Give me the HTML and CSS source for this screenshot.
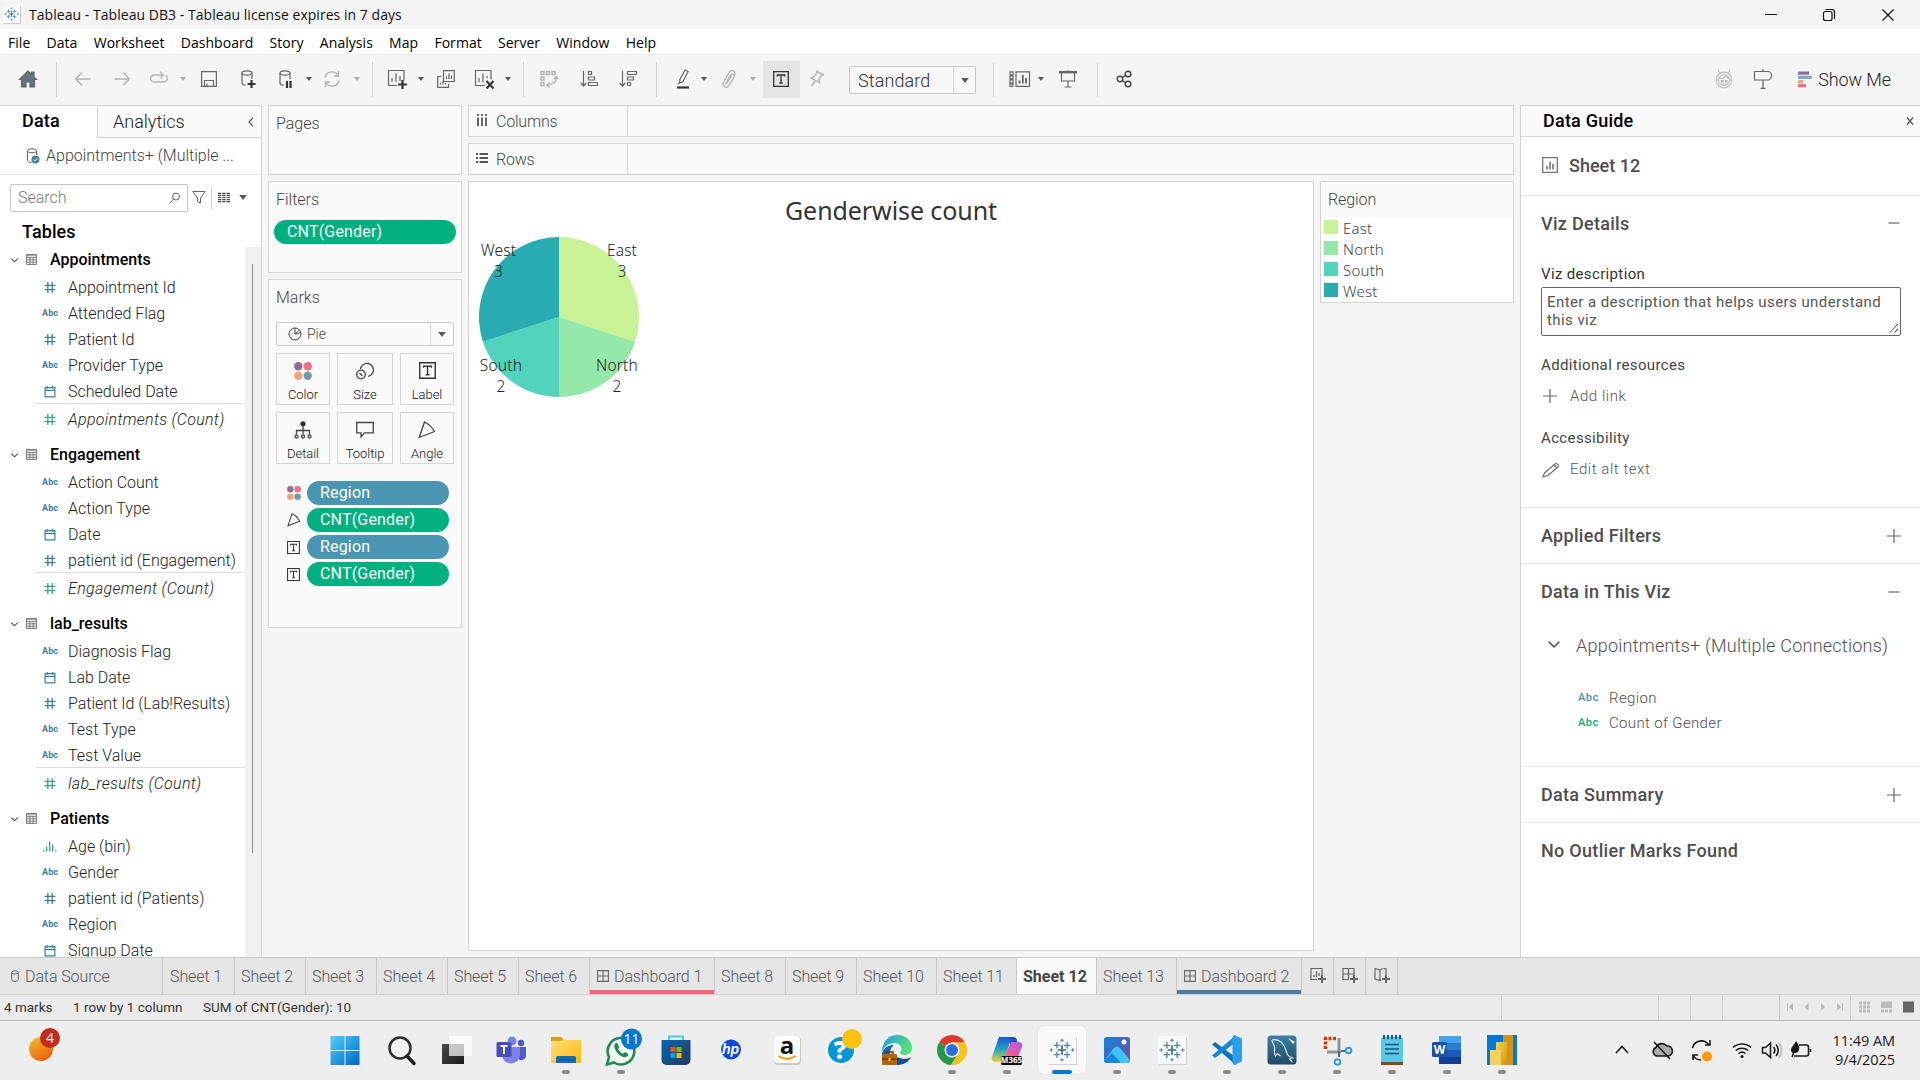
FILE: index.html
```
<!DOCTYPE html>
<html lang="en">
<head>
<meta charset="utf-8">
<title>Tableau - Tableau DB3</title>
<link rel="stylesheet" href="styles.css">
</head>
<body>
<svg class="defs" aria-hidden="true">
  <defs>
    <linearGradient id="gWin" x1="0" y1="0" x2="1" y2="1"><stop offset="0" stop-color="#4fd0ff"/><stop offset="1" stop-color="#0067c8"/></linearGradient>
    <linearGradient id="gEgg" x1="0" y1="0" x2="0.6" y2="1"><stop offset="0" stop-color="#f2c230"/><stop offset="1" stop-color="#f0600c"/></linearGradient>
    <linearGradient id="gFolder" x1="0" y1="0" x2="1" y2="1"><stop offset="0" stop-color="#ffe07a"/><stop offset="1" stop-color="#fbb80c"/></linearGradient>
    <linearGradient id="gStore" x1="0" y1="0" x2="1" y2="1"><stop offset="0" stop-color="#0569b8"/><stop offset="1" stop-color="#253858"/></linearGradient>
    <linearGradient id="gEdge" x1="0" y1="0" x2="1" y2="0.4"><stop offset="0" stop-color="#1b9de2"/><stop offset="1" stop-color="#5be07a"/></linearGradient>
    <linearGradient id="gCopL" x1="0" y1="0" x2="0" y2="1"><stop offset="0" stop-color="#1a56d8"/><stop offset="0.5" stop-color="#26a5c0"/><stop offset="1" stop-color="#e5d33a"/></linearGradient>
    <linearGradient id="gCopR" x1="1" y1="0" x2="0" y2="1"><stop offset="0" stop-color="#a55cf0"/><stop offset="0.5" stop-color="#ec55a8"/><stop offset="1" stop-color="#fb8a50"/></linearGradient>
    <linearGradient id="gPhoto" x1="0" y1="0" x2="1" y2="1"><stop offset="0" stop-color="#0a86e0"/><stop offset="1" stop-color="#80469c"/></linearGradient>
    <linearGradient id="gSql" x1="0" y1="0" x2="0" y2="1"><stop offset="0" stop-color="#3d80a6"/><stop offset="1" stop-color="#1f4a66"/></linearGradient>
    <linearGradient id="gBi" x1="0" y1="0" x2="1" y2="1"><stop offset="0" stop-color="#f8d54e"/><stop offset="1" stop-color="#d59312"/></linearGradient>
    <linearGradient id="gDark" x1="0" y1="0" x2="1" y2="1"><stop offset="0" stop-color="#4a4a4a"/><stop offset="1" stop-color="#1c1c1c"/></linearGradient>
  </defs>
  <symbol id="caret" viewBox="0 0 6 4"><path d="M0 0h6L3 4z" fill="currentColor"/></symbol>
  <symbol id="hash" viewBox="0 0 12 12"><path d="M4 1v10M8 1v10M1 4h10M1 8h10" fill="none" stroke="currentColor" stroke-width="1.2"/></symbol>
  <symbol id="cal" viewBox="0 0 12 12"><path d="M1.5 2.5h9v8.500h-9zM1.500 5h9M3.500 1v2.500M8.500 1v2.500" fill="none" stroke="currentColor" stroke-width="1.1"/></symbol>
  <symbol id="bin" viewBox="0 0 14 12"><path d="M.7 9.500v1.500M3.700 6v5M6.700 1v10M9.700 4v7M12.800 9.500v1.500" fill="none" stroke="currentColor" stroke-width="1.300"/></symbol>
  <symbol id="chev" viewBox="0 0 12 12"><path d="M1.500 4L6 8.500L10.500 4" fill="none" stroke="currentColor" stroke-width="1.300"/></symbol>
  <symbol id="table" viewBox="0 0 10 10"><path d="M.5.5h9v9h-9zM.5 3h9M.5 5.300h9M.5 7.500h9M3.500 3v6.500M6.500 3v6.500M.5 1h9" fill="none" stroke="#777" stroke-width=".9"/></symbol>
  <symbol id="tbox" viewBox="0 0 16 16"><path d="M.7.7h14.600v14.600h-14.600z M4.300 5.500V4h7.400v1.500M8 4v8M6.300 12h3.400" fill="none" stroke="#333" stroke-width="1.300"/></symbol>
  <symbol id="dots" viewBox="0 0 18 18"><circle cx="4.300" cy="4.300" r="4.200" fill="#8a6f9b"/><circle cx="13.700" cy="4.300" r="4.200" fill="#fb6b7c"/><circle cx="4.300" cy="13.700" r="4.200" fill="#f5a57a"/><circle cx="13.700" cy="13.700" r="4.200" fill="#6e9aa8"/></symbol>
  <symbol id="angle" viewBox="0 0 18 18"><path d="M6.500 1L1.200 16.500L16.500 10.500Q13 4 6.500 1z" fill="none" stroke="#444" stroke-width="1.300"/></symbol>
  <symbol id="plus" viewBox="0 0 16 16"><path d="M8 1v14M1 8h14" stroke="#666" stroke-width="1.200"/></symbol>
  <symbol id="dash" viewBox="0 0 16 16"><path d="M2.500 8h11" stroke="#666" stroke-width="1.200"/></symbol>
  <symbol id="board" viewBox="0 0 12 12"><path d="M.6.6h10.800v10.800H.6zM6 .6v10.800M.6 6h10.800" fill="none" stroke="#666" stroke-width="1.100"/></symbol>
  <symbol id="tabl" viewBox="0 0 28 28">
    <g fill="none" stroke="#4a88ad" stroke-width="1.400"><path d="M8.500 5.500v7M5 9h7M19.500 5.500v7M16 9h7M8.500 15.500v7M5 19h7M19.500 15.500v7M16 19h7"/><path d="M14 1.500v4M12 3.500h4M14 22.500v4M12 24.500h4M2.500 12v4M.5 14h4M25.500 12v4M23.500 14h4" stroke-width="1.100"/><path d="M14 9v10M9.500 14h9" stroke="#2f6f98" stroke-width="1.800"/></g>
  </symbol>
  <symbol id="tableauTile" viewBox="0 0 48 48"><rect x="11" y="11" width="28" height="28" fill="#d2d2d2"/><rect x="10" y="10" width="28" height="28" fill="#f8f8f8"/><use href="#tabl" x="11" y="11" width="26" height="26"/></symbol>
  <symbol id="run" viewBox="0 0 48 48"><rect x="20" y="44" width="8" height="4" rx="2" fill="#8a8a8a"/></symbol>
</svg>

<header class="titlebar">
  <svg class="app-icon" viewBox="0 0 18 20"><rect x="1" y="1" width="17" height="18" fill="#ccc"/><rect width="17" height="18" fill="#f7fafc"/><use href="#tabl" x="1" y="1" width="15" height="16"/></svg>
  <span class="app-title">Tableau - Tableau DB3 - Tableau license expires in 7 days</span>
  <svg class="win-controls" viewBox="0 0 132 16"><g fill="none" stroke="#111" stroke-width="1.200"><path d="M1 7.500h12M118.500 2.500l11 11M129.500 2.500l-11 11"/><rect x="59.500" y="4.500" width="8.500" height="9" rx="2"/><path d="M61.500 2.500h6.500a2.500 2.500 0 0 1 2.500 2.500v7"/></g></svg>
</header>

<nav class="menubar"><span>File</span><span>Data</span><span>Worksheet</span><span>Dashboard</span><span>Story</span><span>Analysis</span><span>Map</span><span>Format</span><span>Server</span><span>Window</span><span>Help</span></nav>

<div class="toolbar">
  <svg class="w20 g18" viewBox="0 0 20 18"><path d="M10 1L1.500 9.500h2V17H8v-5h4v5h4.500V9.500h2L16 7V2h-2.500v2.500z" fill="#66727f"/></svg>
  <i class="sep g18"></i>
  <svg class="w16 g18 off" viewBox="0 0 16 16"><path d="M15.500 8H1M7 1.500L.8 8L7 14.500"/></svg>
  <svg class="w16 g23 off" viewBox="0 0 16 16"><path d="M.5 8H15M9 1.500L15.200 8L9 14.500"/></svg>
  <svg class="w20 g19 off" viewBox="0 0 20 16"><path d="M13 4H5.500a4 4 0 0 0-4 3.500a4 4 0 0 0 4 3.500h9a4 4 0 0 0 4-3.500a3.500 3.500 0 0 0-1.500-3M11 .8L14.500 4L11 7.200"/></svg>
  <svg class="caret g11 dim"><use href="#caret"/></svg>
  <svg class="w16 g15" viewBox="0 0 16 16"><path d="M.6.6h14.800v14.800H.6zM3.500 15.400V9.500h9v5.900M6 15.400v-3"/></svg>
  <svg class="w16 g23" viewBox="0 0 16 18"><path d="M2 3v10c0 1.200 1.500 2 3.500 2.300M12 3v6"/><ellipse cx="7" cy="3" rx="5" ry="2.200"/><path class="bold" d="M11.500 10v8M7.500 14h8"/></svg>
  <svg class="w16 g22" viewBox="0 0 16 18"><path d="M2 3v10c0 1.200 1.500 2 3.500 2.300M12 3v6"/><ellipse cx="7" cy="3" rx="5" ry="2.200"/><path class="bold" d="M9 11v7M12.500 11v7"/></svg>
  <svg class="caret g12"><use href="#caret"/></svg>
  <svg class="w18 g11 off" viewBox="0 0 18 18"><path d="M2 7.500A7 7 0 0 1 15 5.500M16 10.500A7 7 0 0 1 3 12.500M15.500 1v5H11M2.500 17v-5H7"/></svg>
  <svg class="caret g13 dim"><use href="#caret"/></svg>
  <i class="sep g12"></i>
  <svg class="w20 g14" viewBox="0 0 20 20"><path d="M10 16.500H1.500v-15h15.500v10M5 13v-4M9 13V4.500M13 12V7"/><path class="bold" d="M15.500 11v9M11 15.500h9"/></svg>
  <svg class="caret g11"><use href="#caret"/></svg>
  <svg class="w18 g13" viewBox="0 0 18 18"><path d="M6.500.700h10.800v10.800H6.500zM4.500 6.500H.7v10.800h10.800v-3.500M9.500 9V6.500M12 9V3.500M14.500 9V5.500M3.500 14.500v-2M6 14.500v-4M8.500 14.500v-1.500"/></svg>
  <svg class="w20 g19" viewBox="0 0 20 20"><path d="M11 16.500H1.500v-15h15.500v9M5 13v-4M9 13V4.500M13 9V7"/><path class="bold" d="M12.500 12l7 7.500M19.500 12l-7 7.500"/></svg>
  <svg class="caret g11"><use href="#caret"/></svg>
  <i class="sep g12"></i>
  <svg class="w18 g16 off" viewBox="0 0 18 18"><path d="M1 1.500h3v3H1zM6.500 1.500h3v3h-3zM12 1.500h3v3h-3zM1 7h3v3H1zM1 12.500h3v3H1zM16.500 7c0 5-3 7.500-9.500 8M14 9l2.500-2.500L18 9M9.500 12.500L7 15l2.500 2.500"/></svg>
  <svg class="w18 g22" viewBox="0 0 18 18"><path d="M3.500 1v15M.7 13l2.800 3l2.800-3M8.500 1.500h3v3h-3zM8.500 7h6v3h-6zM8.500 12.500h9v3h-9z"/></svg>
  <svg class="w18 g21" viewBox="0 0 18 18"><path d="M3.500 1v15M.7 13l2.800 3l2.800-3M8.500 1.500h9v3h-9zM8.500 7h6v3h-6zM8.500 12.500h3v3h-3z"/></svg>
  <i class="sep g19"></i>
  <svg class="w14 g19" viewBox="0 0 14 20"><path d="M9 1l3 1.500L7 12.500L3.500 14L3.800 10.800zM2 15.500L3.500 13.500"/><path class="bold" d="M1 18.500h12"/></svg>
  <svg class="caret g11"><use href="#caret"/></svg>
  <svg class="w14 g15 off" viewBox="0 0 14 18"><path d="M5 13L9.500 5.500M3.500 14.500l5-9.500a2 2 0 0 1 3.500 2L7 15.500a3 3 0 0 1-5.500-3L7 2.500a3.200 3.200 0 0 1 6 2L9.500 12"/></svg>
  <svg class="caret g14 dim"><use href="#caret"/></svg>
  <span class="pressed g7"><svg class="w16"><use href="#tbox"/></svg></span>
  <svg class="w14 g10 off" viewBox="0 0 14 18"><path d="M7 1l6 4l-2 .5l-2 4l.5 3l-3.500-2L1 8l3-1l2.500-3.500zM5.500 10.500L1.500 16"/></svg>
  <span class="select g25"><b>Standard</b><em><svg class="caret big"><use href="#caret"/></svg></em></span>
  <i class="sep g17"></i>
  <svg class="w22 g15" viewBox="0 0 22 16"><path d="M1 .8h3v3H1zM1 4.900h3v3H1zM1 9h3v3H1zM1 13h3v2.500H1zM7 .8h13.500v14.500H7z"/><path d="M10.500 12.500v-3M13.800 12.500V4M17 12.500V7" stroke-width="1.800"/></svg>
  <svg class="caret g7"><use href="#caret"/></svg>
  <svg class="w18 g15" viewBox="0 0 18 18"><path d="M2.500 2.500v8.500h13V2.500M9 0v2M9 11v6M5.500 17h7"/><path class="mid" d="M0 2.200h18"/></svg>
  <i class="sep g20"></i>
  <svg class="w16 g18" viewBox="0 0 16 18"><g class="mid2"><circle cx="4" cy="9" r="2.800"/><circle cx="12" cy="4" r="2.800"/><circle cx="12" cy="14" r="2.800"/><path d="M6.300 7.500L9.700 5.500M6.300 10.500L9.700 12.500"/></g></svg>
  <div class="toolbar-right">
    <svg class="w18" viewBox="0 0 18 20"><g fill="none" stroke="#bdbdbd" stroke-width="1.200"><circle cx="9" cy="11" r="7.800"/><circle cx="9" cy="11" r="5.500"/><path d="M4.500 4L3 .8M13.500 4L15 .8M4 9.500h4l3-2.500l3 2.500M6.500 15h5"/></g><path d="M6 11h2.500v2.500H6zM10 11h2.500v2.500H10z" fill="#b4b4b4" stroke="none"/></svg>
    <svg class="w20" viewBox="0 0 20 20"><path d="M10 0v2.500M10 11v8M7.500 19.300h5M1.500 2.500H15c2 0 3.500 2 3.500 4.200S17 11 15 11H1.500z" stroke="#666"/></svg>
    <span class="showme"><svg class="w14" viewBox="0 0 14 16"><path d="M0 0h11v3.200H0z" fill="#8a6f9b"/><path d="M0 4.200h14v3.200H0z" fill="#7fa6cf"/><path d="M0 8.400h5v3.200H0z" fill="#f5a57a"/><path d="M0 12.600h8v3.200H0z" fill="#fb6b7c"/></svg>Show Me</span>
  </div>
</div>

<main class="workspace">
  <aside class="data-pane">
    <div class="pane-tabs"><span class="tab-data">Data</span><span class="tab-analytics">Analytics<svg viewBox="0 0 6 10"><path d="M5 .7L1 5l4 4.300" fill="none" stroke="#555" stroke-width="1.200"/></svg></span></div>
    <div class="source"><svg class="w14" viewBox="0 0 14 16"><path d="M1.500 3v9.500c0 1 1.500 2 4 2M10.500 3v4"/><ellipse cx="6" cy="2.800" rx="4.500" ry="2"/><circle cx="9.500" cy="11.500" r="4" class="fillblue"/><path d="M7.500 11.500l1.500 1.500l2.500-2.800" class="white"/></svg>Appointments+ (Multiple ...</div>
    <div class="searchrow">
      <span class="search">Search<svg class="w12" viewBox="0 0 12 12"><circle cx="7" cy="4.500" r="3.500"/><path d="M4.500 7L1 11"/></svg></span>
      <svg class="w14 funnel" viewBox="0 0 14 14"><path d="M.8 1h12.400L8.500 7.500v5l-3-1.500V7.500z"/></svg>
      <i class="sep"></i>
      <svg class="w12 list" viewBox="0 0 12 10"><path d="M0 .8h12M0 2.900h12M0 5h12M0 7.100h12M0 9.200h12" stroke-dasharray="3.300 1" stroke="#444" stroke-width="1.200"/></svg>
      <svg class="caret big lc"><use href="#caret"/></svg>
    </div>
    <h2 class="tables-title">Tables</h2>
    <div class="tree-wrap">
      <div class="tree">
        <section>
          <h3><svg class="tw"><use href="#chev"/></svg><svg class="ti"><use href="#table"/></svg>Appointments</h3>
          <p><svg><use href="#hash"/></svg>Appointment Id</p><p><b>Abc</b>Attended Flag</p><p><svg><use href="#hash"/></svg>Patient Id</p><p><b>Abc</b>Provider Type</p><p><svg><use href="#cal"/></svg>Scheduled Date</p>
          <p class="count"><svg><use href="#hash"/></svg><em>Appointments (Count)</em></p>
        </section>
        <section>
          <h3><svg class="tw"><use href="#chev"/></svg><svg class="ti"><use href="#table"/></svg>Engagement</h3>
          <p><b>Abc</b>Action Count</p><p><b>Abc</b>Action Type</p><p><svg><use href="#cal"/></svg>Date</p><p><svg><use href="#hash"/></svg>patient id (Engagement)</p>
          <p class="count"><svg><use href="#hash"/></svg><em>Engagement (Count)</em></p>
        </section>
        <section>
          <h3><svg class="tw"><use href="#chev"/></svg><svg class="ti"><use href="#table"/></svg>lab_results</h3>
          <p><b>Abc</b>Diagnosis Flag</p><p><svg><use href="#cal"/></svg>Lab Date</p><p><svg><use href="#hash"/></svg>Patient Id (Lab!Results)</p><p><b>Abc</b>Test Type</p><p><b>Abc</b>Test Value</p>
          <p class="count"><svg><use href="#hash"/></svg><em>lab_results (Count)</em></p>
        </section>
        <section>
          <h3><svg class="tw"><use href="#chev"/></svg><svg class="ti"><use href="#table"/></svg>Patients</h3>
          <p class="green"><svg class="bin"><use href="#bin"/></svg>Age (bin)</p><p><b>Abc</b>Gender</p><p><svg><use href="#hash"/></svg>patient id (Patients)</p><p><b>Abc</b>Region</p><p><svg><use href="#cal"/></svg>Signup Date</p>
        </section>
      </div>
      <div class="scrolltrack"><i></i></div>
    </div>
  </aside>

  <div class="cards">
    <section class="card pages"><h4>Pages</h4></section>
    <section class="card filters"><h4>Filters</h4><span class="pill measure">CNT(Gender)</span></section>
    <section class="card marks">
      <h4>Marks</h4>
      <div class="marktype"><svg viewBox="0 0 14 14"><circle cx="7" cy="7" r="6"/><path d="M7 7V1.500M7 7l4.500-4M7 7h1.500l4.300-1.500"/></svg><span>Pie</span><em><svg class="caret big"><use href="#caret"/></svg></em></div>
      <div class="buttons">
        <div><svg><use href="#dots"/></svg>Color</div>
        <div><svg viewBox="0 0 18 18"><path d="M4.500 7A6.500 6.500 0 1 1 12 14.300" class="k"/><circle cx="5" cy="12.500" r="4.300" class="k"/><path d="M3.500 11l3 3" class="k"/></svg>Size</div>
        <div><svg class="t"><use href="#tbox"/></svg>Label</div>
        <div><svg viewBox="0 0 18 18"><circle cx="9" cy="2.800" r="2.600" fill="#333"/><path d="M9 4v9M2.500 13V9.500h13V13" class="k"/><circle cx="2.500" cy="15.500" r="1.500" class="k"/><circle cx="9" cy="15.500" r="1.500" class="k"/><circle cx="15.500" cy="15.500" r="1.500" class="k"/></svg>Detail</div>
        <div><svg viewBox="0 0 18 18"><path d="M.7 1.500h16.600v10.300H8.500l-3.500 4v-4H.7z" class="k"/></svg>Tooltip</div>
        <div><svg><use href="#angle"/></svg>Angle</div>
      </div>
      <ul class="encodings">
        <li><svg><use href="#dots"/></svg><span class="pill dim-pill">Region</span></li>
        <li><svg><use href="#angle"/></svg><span class="pill measure">CNT(Gender)</span></li>
        <li><svg class="t"><use href="#tbox"/></svg><span class="pill dim-pill">Region</span></li>
        <li><svg class="t"><use href="#tbox"/></svg><span class="pill measure">CNT(Gender)</span></li>
      </ul>
    </section>
  </div>

  <div class="center">
    <div class="shelf"><span><svg class="w12" viewBox="0 0 12 12"><path d="M2 0v2M6 0v2M10 0v2M2 3.500V12M6 3.500V12M10 3.500V12" stroke="#555" stroke-width="1.800"/></svg>Columns</span></div>
    <div class="shelf"><span><svg class="w12" viewBox="0 0 12 12"><path d="M0 2h2M0 6h2M0 10h2M3.500 2H12M3.500 6H12M3.500 10H12" stroke="#555" stroke-width="1.800"/></svg>Rows</span></div>
    <div class="viewrow">
      <div class="view">
        <h1>Genderwise count</h1>
        <svg class="pie" viewBox="0 0 190 180">
          <path d="M90 87V7A80 80 0 0 1 166.080 111.720z" fill="#c8f296"/>
          <path d="M90 87L166.080 111.720A80 80 0 0 1 90 167z" fill="#95e8aa"/>
          <path d="M90 87V167A80 80 0 0 1 13.920 111.720z" fill="#51d4bb"/>
          <path d="M90 87L13.920 111.720A80 80 0 0 1 90 7z" fill="#28abb1"/>
          <g class="labels"><text x="29.500" y="25.500">West</text><text x="29.500" y="46.500">3</text><text x="153" y="25.500">East</text><text x="153" y="46.500">3</text><text x="32" y="140.500">South</text><text x="32" y="161.500">2</text><text x="148" y="140.500">North</text><text x="148" y="161.500">2</text></g>
        </svg>
      </div>
      <div class="legend"><h4>Region</h4><ul><li><i class="c1"></i>East</li><li><i class="c2"></i>North</li><li><i class="c3"></i>South</li><li><i class="c4"></i>West</li></ul></div>
    </div>
  </div>

  <aside class="guide">
    <div class="guide-head">Data Guide<svg viewBox="0 0 8 8"><path d="M1 .5l6 7M7 .5l-6 7" stroke="#555" stroke-width="1.300"/></svg></div>
    <div class="guide-sheet"><svg viewBox="0 0 16 16"><path d="M.7.700h14.600v14.600H.7z"/><path d="M5 12.500V9M8 12.500V4.500M11 12.500V7" stroke-width="1.600"/></svg>Sheet 12</div>
    <section class="details">
      <h5>Viz Details<svg><use href="#dash"/></svg></h5>
      <label>Viz description</label>
      <div class="textarea">Enter a description that helps users understand<br>this viz<svg viewBox="0 0 10 10"><path d="M1 9.500L9 1M5.500 9.500L9 6" stroke="#555" stroke-width="1"/></svg></div>
      <h6>Additional resources</h6>
      <p><svg><use href="#plus"/></svg>Add link</p>
      <h6>Accessibility</h6>
      <p><svg class="pencil" viewBox="0 0 18 16"><path d="M2.500 11.500L13 2.500c1.500-1.500 4.500 1 3 2.800L6 14L.8 15.300z M12 3.500l3 3" fill="none" stroke="#666" stroke-width="1.100"/></svg>Edit alt text</p>
    </section>
    <h5 class="bar">Applied Filters<svg><use href="#plus"/></svg></h5>
    <section class="inviz">
      <h5>Data in This Viz<svg><use href="#dash"/></svg></h5>
      <div class="ds"><svg><use href="#chev"/></svg>Appointments+ (Multiple Connections)</div>
      <div class="fld"><b>Abc</b>Region</div>
      <div class="fld g"><b>Abc</b>Count of Gender</div>
    </section>
    <h5 class="bar">Data Summary<svg><use href="#plus"/></svg></h5>
    <h5>No Outlier Marks Found</h5>
  </aside>
</main>

<div class="sheets">
  <span class="s-src"><svg class="db" viewBox="0 0 8 12"><path d="M.7 2.500v7c0 2.500 6.600 2.500 6.600 0v-7M.7 2.500c0 2 6.600 2 6.600 0c0-2.300-6.600-2.300-6.600 0z" fill="none" stroke="#666"/></svg>Data Source</span>
  <span class="s72">Sheet 1</span><span>Sheet 2</span><span>Sheet 3</span><span>Sheet 4</span><span>Sheet 5</span><span>Sheet 6</span>
  <span class="dashb red"><svg><use href="#board"/></svg>Dashboard 1</span>
  <span>Sheet 8</span><span>Sheet 9</span><span class="s80">Sheet 10</span><span class="s80">Sheet 11</span><span class="s80 active">Sheet 12</span><span class="s80">Sheet 13</span>
  <span class="dashb blue"><svg><use href="#board"/></svg>Dashboard 2</span>
  <span class="new"><svg viewBox="0 0 16 16"><path d="M7 12.500H1v-11h11V8M4 10V8M6.500 10V4M9 9V6"/><path d="M12 8v8M8 12h8" stroke-width="2"/></svg></span>
  <span class="new"><svg viewBox="0 0 16 16"><path d="M7 12.500H1v-11h11V8M6.500 1.500v11M1 7h11"/><path d="M12 8v8M8 12h8" stroke-width="2"/></svg></span>
  <span class="new"><svg viewBox="0 0 16 16"><path d="M1 1.500l5 1.500v10.500L1 12zM6 3c1-1 3-1.500 6-1.500V8M6 13.500l1-.5"/><path d="M12 8v8M8 12h8" stroke-width="2"/></svg></span>
</div>

<div class="status">
  <span class="st1">4 marks</span><span class="st2">1 row by 1 column</span><span class="st3">SUM of CNT(Gender): 10</span>
  <i class="c157"></i><i class="c32"></i><i class="c32"></i><i class="c57"></i>
  <div class="nav"><svg viewBox="0 0 56 8"><path d="M.5 0v8M55.500 0v8" stroke="#b8b8b8"/><path d="M6 0v8L2 4zM21.500 0v8l-4-4zM34 0v8l4-4zM50 0v8l4-4z" fill="#b8b8b8"/></svg></div>
  <svg class="modes" viewBox="0 0 56 12"><path d="M0 2h11M0 6h11M0 10h11" stroke="#bbb" stroke-width="3" stroke-dasharray="3 1"/><path d="M22 .5h11v6.500H22z" fill="#bbb"/><path d="M22 10h11" stroke="#bbb" stroke-width="3" stroke-dasharray="3 1"/><path d="M44 .5h11v11H44z" fill="#666"/></svg>
</div>

<footer class="taskbar">
  <svg class="weather" viewBox="0 0 34 48"><ellipse cx="13" cy="23" rx="12" ry="12" fill="url(#gEgg)"/><circle cx="22" cy="12" r="10" fill="#c42b1c"/><text x="22" y="17" class="badge">4</text></svg>
  <div class="apps">
    <svg viewBox="1 0 48 48"><path d="M9.500 10h14v14h-14zM24.500 10h14v14h-14zM9.500 25h14v14h-14zM24.500 25h14v14h-14z" fill="url(#gWin)"/></svg>
    <svg viewBox="0 0 48 48"><circle cx="23" cy="22" r="10.500" fill="#f2f2f2" stroke="#2d2d2d" stroke-width="2.500"/><path d="M30 30l7 7.500" stroke="#222" stroke-width="3.500" stroke-linecap="round"/></svg>
    <svg viewBox="0 0 48 48"><rect x="10" y="18" width="22" height="20" fill="url(#gDark)"/><rect x="17" y="10" width="23" height="20" fill="#fff" fill-opacity=".72"/></svg>
    <svg viewBox="0 0 48 48"><circle cx="25" cy="15" r="4.500" fill="#7b83eb"/><circle cx="34" cy="17" r="3.200" fill="#5059c9"/><path d="M30 21h9v9a5 5 0 0 1-9 2z" fill="#5059c9"/><path d="M15 21h18v8a9 8.500 0 0 1-18 0z" fill="#7b83eb"/><rect x="9.500" y="16" width="15" height="15" rx="1.500" fill="#464eb8"/><path d="M13.500 20h7M17 20v8" stroke="#fff" stroke-width="2"/></svg>
    <svg viewBox="0 0 48 48"><path d="M9 11h10l3 3h17v10H9z" fill="#e0a106"/><path d="M9 15h9l3-1h18v23H9z" fill="url(#gFolder)"/><path d="M14 37v-5a2 2 0 0 1 2-2h16a2 2 0 0 1 2 2v5z" fill="#0f6cbd"/><path d="M18 33.500h12" stroke="#0a4a80"/><use href="#run"/></svg>
    <svg viewBox="0 0 48 48"><path d="M10 38.500l2-7.500A13.300 13.300 0 1 1 17 36.500z" fill="#f2f8f4" stroke="#1f8a57" stroke-width="2.600"/><path d="M17.500 18.500c1-2 3-2 3.500 0l1 2.200c.3 1-1.300 1.800-.8 2.600c1 2 2.500 3.300 4.500 4.200c1 .4 1.500-1.800 2.700-1.300l2.300 1.300c1.500 1-.5 3.500-2.500 3.700c-5 .3-12-7-10.700-12.700z" fill="#1f8a57"/><circle cx="34.500" cy="13" r="10.500" fill="#0078d4"/><text x="34.500" y="18" class="badge">11</text><use href="#run"/></svg>
    <svg viewBox="0 0 48 48"><path d="M17 15v-4.500h14V15" fill="none" stroke="#3ccbf4" stroke-width="2"/><path d="M9.500 14h29v20a5 5 0 0 1-5 5h-19a5 5 0 0 1-5-5z" fill="url(#gStore)"/><path d="M18.500 21h5v5h-5z" fill="#f25022"/><path d="M24.500 21h5v5h-5z" fill="#7fba00"/><path d="M18.500 27h5v5h-5z" fill="#00a4ef"/><path d="M24.500 27h5v5h-5z" fill="#ffb900"/></svg>
    <svg viewBox="0 0 48 48"><circle cx="24" cy="23.500" r="10" fill="#0b49dd"/><text x="23.500" y="28" class="hp">hp</text></svg>
    <svg viewBox="0 0 48 48"><rect x="11" y="11" width="27" height="28" rx="4" fill="#c9c9c9"/><rect x="11" y="10" width="26" height="27" rx="4" fill="#fdfdfd"/><text x="24" y="28" class="amz">a</text><path d="M15.500 30q8.500 6 17 0" fill="none" stroke="#ff9900" stroke-width="2"/></svg>
    <svg viewBox="0 0 48 48"><circle cx="23" cy="24" r="14.500" fill="#fff"/><circle cx="23" cy="24" r="13" fill="#0096d6"/><text x="22" y="33" class="help">?</text><circle cx="34" cy="13" r="10" fill="#ffc20e"/></svg>
    <svg viewBox="0 0 48 48"><path d="M9 26C9 16 15 9 24.500 9C34 9 39 16 39 22c0 5-4 7-8 7c-3 0-4-1.500-4-2.500c0-1 1.500-1.500 1.500-4c0-3-3-5.500-7-5.500C15 17 11 21 9 26z" fill="url(#gEdge)"/><path d="M9 27c2-6 7-8 12-8c-3 2-4 5-4 8c0 6 6 11 14 9c-3 3-10 4-15 1s-7-7-7-10z" fill="#1268b3"/><path d="M24 31c4 2 10 3 14 0c-2 5-8 8-14 8z" fill="#0c4f96"/><rect x="9" y="28" width="15" height="11" rx="1" fill="#b2670c"/><path d="M13 28v-2h7v2M9 33h15" fill="none" stroke="#6b3803" stroke-width="1.500"/><path d="M15.500 32h2v3h-2z" fill="#ffc83d"/></svg>
    <svg viewBox="0 0 48 48"><path d="M24 24L11 16.500A15 15 0 0 1 37 16.500L24 16.500z" fill="#dd3a2c"/><path d="M24 24L11 16.500A15 15 0 0 0 23 39L30.500 27.500z" fill="#24994d"/><path d="M24 16.500H37A15 15 0 0 1 23 39L30.500 27.500z" fill="#fbc116"/><circle cx="24" cy="24" r="7.500" fill="#fff"/><circle cx="24" cy="24" r="6" fill="#2b6de5"/><use href="#run"/></svg>
    <svg viewBox="0 0 48 48"><path d="M16 11h13l-8 22a5 5 0 0 1-5 3h-4a3.500 3.500 0 0 1-3-5z" fill="url(#gCopL)"/><path d="M27 11h3a4 4 0 0 1 4 4l1 3h-8z" fill="#1c4fc4"/><path d="M28 16h8a3.500 3.500 0 0 1 3 5l-5 12a5 5 0 0 1-5 3H19z" fill="url(#gCopR)"/><rect x="18" y="30" width="21" height="9" rx="1.500" fill="#0a0a0a"/><text x="28.500" y="37.300" class="m365">M365</text><use href="#run"/></svg>
    <svg viewBox="0 0 48 48" class="current"><use href="#tableauTile"/><rect x="14" y="44" width="20" height="4" rx="2" fill="#0078d4"/></svg>
    <svg viewBox="0 0 48 48"><rect x="11" y="11" width="26" height="26" rx="3" fill="url(#gPhoto)"/><path d="M11 35l10-13q3-3 6 0l10 12a3 3 0 0 1-3 3H14a3 3 0 0 1-3-2z" fill="#3fc4f4"/><path d="M11 35l8-8l9 10H14a3 3 0 0 1-3-2z" fill="#1688dc"/><circle cx="31" cy="16" r="2.500" fill="#f2f4ff"/><use href="#run"/></svg>
    <svg viewBox="0 0 48 48"><use href="#tableauTile"/><use href="#run"/></svg>
    <svg viewBox="0 0 48 48"><path d="M9 18.500l3-2.500L33 31.500V39z" fill="#0b73bd"/><path d="M9 29.500l3 2.500L33 16V9z" fill="#1687d0"/><path d="M31 9l8 3.500v23L31 39l-1.500-2V11z" fill="#27a2ee"/><use href="#run"/></svg>
    <svg viewBox="0 0 48 48"><rect x="9.500" y="9.500" width="29" height="29" rx="3.500" fill="url(#gSql)"/><path d="M14 14c8-2 13 5 14.500 12c.5 3 3 5 6 6l-3 1l3 3M14 14c0 3 2 4 2.500 7c.5 4-1 7 1 9l2-2.500l3 2.500" fill="none" stroke="#dfe9ef" stroke-width="1.200"/><path d="M30 12l5 6l2-2z" fill="#e8eef2"/><use href="#run"/></svg>
    <svg viewBox="0 0 48 48"><path d="M12.500 23v-10.500h11" fill="none" stroke="#d83b01" stroke-width="3.500" stroke-dasharray="3 1.500"/><path d="M26 12v14M14 26h14" stroke="#8c959c" stroke-width="3"/><path d="M26 25v6M28 25h4" stroke="#5a6a75" stroke-width="2"/><circle cx="35.500" cy="24.500" r="2.800" fill="none" stroke="#2aa0e4" stroke-width="2"/><circle cx="24.500" cy="36" r="2.800" fill="none" stroke="#2aa0e4" stroke-width="2"/><use href="#run"/></svg>
    <svg viewBox="0 0 48 48"><rect x="13" y="11" width="22" height="27" rx="2" fill="#58c8e6"/><path d="M13 36h22v3H13z" fill="#8a4b12"/><path d="M17 18.500h14M17 23h14M17 27.500h14" stroke="#11587a" stroke-width="1.500"/><path d="M16 9v4M20 9v4M24 9v4M28 9v4M32 9v4" stroke="#155a78" stroke-width="2"/><use href="#run"/></svg>
    <svg viewBox="0 0 48 48"><rect x="16" y="10" width="22" height="28" rx="2" fill="#2b7cd3"/><path d="M16 10h22v7H16z" fill="#41a5ee"/><path d="M16 24h22v7H16z" fill="#185abd"/><path d="M16 31h22v7H16z" fill="#103f91"/><rect x="9" y="16" width="15" height="15" rx="1.500" fill="#1851ac"/><text x="16.500" y="28" class="word">W</text><use href="#run"/></svg>
    <svg viewBox="0 0 48 48"><rect x="9" y="9" width="30" height="30" fill="#0078d4"/><path d="M25 9h10v30H25z" fill="#d59312"/><path d="M18 16h11v23H18z" fill="url(#gBi)"/><path d="M12 24h11v15H12z" fill="#f7d25a"/><use href="#run"/></svg>
  </div>
  <svg class="tray" viewBox="0 0 204 24"><g fill="none" stroke="#1a1a1a" stroke-width="1.600"><path d="M1 15l6-6.500L13 15"/><path d="M41.500 18a4.500 4.500 0 0 1-.5-8.500a6.500 6.500 0 0 1 11-1.500a5 5 0 0 1 2.500 9.500a5 5 0 0 1-2 .5z" fill="#aaa"/><path d="M39 4l16 17"/><path d="M77.500 10a9 9 0 0 1 16-3.500M95 2v5h-5M78 22v-5h5M78 17a9 9 0 0 0 8 5"/><path d="M118 9.500a13.500 13.500 0 0 1 18 0M120.800 12.500a9.500 9.500 0 0 1 12.400 0M123.500 15.500a5.500 5.500 0 0 1 7 0"/><path d="M147.500 9.500h3l5-4.500v14.500l-5-4.500h-3zM158.500 9a5 5 0 0 1 0 6.500M161 6.500a8.500 8.500 0 0 1 0 11.500"/><path d="M163.500 4.500a11.500 11.500 0 0 1 0 15.500" stroke="#bbb"/><path d="M184 7h7.500a2 2 0 0 1 2 2v7a2 2 0 0 1-2 2H179M195.500 11v3"/></g><circle cx="127" cy="18.500" r="1.600" fill="#1a1a1a"/><circle cx="92" cy="18.500" r="5" fill="#ff9800"/><path d="M176 12c0-3 3-5 5-9c2 3 4 5 3 9c-1 3-3 3-5 3s-3-1-3-3z" fill="#1a1a1a"/><path d="M179 14l-2 5" stroke="#1a1a1a" stroke-width="1.500"/></svg>
  <div class="clock"><span>11:49 AM</span><span>9/4/2025</span></div>
</footer>
</body>
</html>
```

FILE: styles.css
```
* { box-sizing: border-box; }
html, body { margin: 0; height: 1080px; overflow: hidden; }
body {
  width: 1920px;
  display: flex;
  flex-direction: column;
  background: #f5f5f5;
  color: #333;
  font-family: Roboto, "Liberation Sans", sans-serif;
  font-size: 16px;
  font-weight: 300;
}
h1, h2, h3, h4, h5, h6, p, ul { margin: 0; padding: 0; font-weight: inherit; font-size: inherit; }
li { list-style: none; }
svg { flex: none; display: block; }
.defs { width: 0; height: 0; position: absolute; }

/* window chrome */
.titlebar { height: 29px; background: #f3f3f3; display: flex; align-items: center; padding: 0 24px 0 3px; color: #111; font: 400 14px "Open Sans", "Noto Sans", sans-serif; }
.app-icon { width: 18px; height: 20px; }
.app-title { margin-left: 8px; letter-spacing: .04px; }
.win-controls { width: 132px; height: 16px; margin-left: auto; }
.menubar { height: 25px; background: #fff; display: flex; align-items: center; gap: 16.200px; padding: 2px 0 0 8px; color: #000; font: 400 14px "Open Sans", "Noto Sans", sans-serif; letter-spacing: .05px; }

/* toolbar */
.toolbar { height: 51px; border-top: 1px solid #ececec; display: flex; align-items: center; background: #f5f5f5; padding-bottom: 2px; }
.toolbar svg { fill: none; stroke: #666; stroke-width: 1.2; height: 20px; }
.toolbar .off { stroke: #b3b3b3; stroke-width: 1.400; }
.toolbar .bold { stroke: #333; stroke-width: 2.2; }
.toolbar .mid { stroke-width: 2.4; }
.toolbar .mid2 { stroke: #444; stroke-width: 1.400; }
.toolbar .caret { stroke: none; }
.toolbar .dim { color: #aaa; }
.caret { width: 6px; height: 4px !important; color: #555; }
.caret.big { width: 8px; height: 5px !important; }
.sep { width: 1px; height: 35px; background: #d2d2d2; }
.w12 { width: 12px; } .w14 { width: 14px; } .w16 { width: 16px; } .w18 { width: 18px; } .w20 { width: 20px; } .w22 { width: 22px; }
.g7 { margin-left: 7px; } .g10 { margin-left: 10px; } .g11 { margin-left: 11px; } .g12 { margin-left: 12px; } .g13 { margin-left: 13px; } .g14 { margin-left: 14px; } .g15 { margin-left: 15px; } .g16 { margin-left: 16px; } .g17 { margin-left: 17px; } .g18 { margin-left: 18px; } .g19 { margin-left: 19px; } .g20 { margin-left: 20px; } .g21 { margin-left: 21px; } .g22 { margin-left: 22px; } .g23 { margin-left: 23px; } .g25 { margin-left: 25px; }
.pressed { width: 37px; height: 37px; background: #e4e4e4; display: flex; align-items: center; justify-content: center; padding-right: 2px; }
.select { width: 127px; height: 28px; border: 1px solid #c6c6c6; border-radius: 2px; display: flex; align-items: center; background: #f7f7f7; margin-top: 2px; }
.select b { flex: 1; padding-left: 8px; font-weight: 300; font-size: 18px; color: #333; letter-spacing: .1px; }
.select em { width: 22px; height: 100%; border-left: 1px solid #d8d8d8; display: flex; align-items: center; justify-content: center; }
.toolbar-right { margin-left: auto; display: flex; align-items: center; padding-right: 29px; }
.toolbar-right svg + svg { margin-left: 20px; }
.showme { margin-left: 25px; display: flex; align-items: center; gap: 6px; font-size: 18px; color: #222; letter-spacing: -.1px; }
.showme svg { stroke: none; height: 19px; }

.workspace { height: 852px; display: flex; }

/* data pane */
.data-pane { width: 262px; background: #fff; border-right: 1px solid #d4d4d4; border-top: 1px solid #d4d4d4; display: flex; flex-direction: column; }
.data-pane svg { fill: none; stroke: #666; }
.pane-tabs { height: 32px; display: flex; font-size: 18px; }
.tab-data { width: 97px; padding-left: 22px; line-height: 30px; color: #000; font-weight: 500; letter-spacing: .2px; }
.tab-analytics { flex: 1; background: #fafafa; border-left: 1px solid #d4d4d4; border-bottom: 1px solid #d4d4d4; padding: 0 7px 0 15px; display: flex; align-items: center; justify-content: space-between; color: #222; }
.tab-analytics svg { width: 6px; height: 10px; }
.source { height: 37px; border-bottom: 1px solid #e2e2e2; display: flex; align-items: center; gap: 6px; padding: 0 0 1px 26px; color: #444; }
.source svg { height: 18px; }
.fillblue { fill: #3b83ab; stroke: none; }
.white { stroke: #fff; }
.searchrow { height: 46px; display: flex; align-items: center; padding: 0 0 1px 10px; }
.search { width: 178px; height: 28px; border: 1px solid #c6c6c6; border-radius: 2px; display: flex; align-items: center; justify-content: space-between; padding: 0 6px 0 7px; color: #777; }
.search svg { height: 12px; }
.funnel { height: 15px; margin-left: 4px; }
.searchrow .sep { height: 22px; margin-left: 5px; }
.list { height: 11px; margin-left: 6px; }
.lc { margin-left: 9px; }
.data-pane .caret { stroke: none; }
.tables-title { height: 26px; line-height: 21px; padding-left: 22px; font-size: 18px; font-weight: 500; color: #000; letter-spacing: .1px; }
.tree-wrap { height: 710px; display: flex; overflow: hidden; }
.tree { width: 245px; height: 710px; overflow: hidden; }
.tree section { margin-bottom: 8px; }
.tree h3 { height: 27px; display: flex; align-items: center; color: #000; font-weight: 500; padding: 0 0 2px 10px; }
.tree .tw { width: 9px; height: 10px; }
.tree .ti { width: 11px; height: 11px; margin: 0 13px 0 7px; }
.tree p { height: 26px; display: flex; align-items: center; padding-left: 41px; color: #222; }
.tree p svg { width: 14px; height: 13px; margin: 0 11px 0 2px; color: #3a7f9e; stroke: none; }
.tree p b { width: 26px; margin-left: 1px; font-size: 9px; font-weight: 700; color: #3a7f9e; letter-spacing: .1px; }
.tree .count { height: 31px; border-top: 1px solid #dcdcdc; margin: -1px 0 0 36px; padding-left: 5px; }
.tree .count svg, .tree .green svg { color: #3aa583; }
.tree em { letter-spacing: .3px; }
.scrolltrack { width: 16px; background: #f0f0f0; padding: 17px 0 0 7px; }
.scrolltrack i { display: block; width: 1px; height: 589px; background: #888; }

/* shelves and cards */
.cards { width: 194px; margin-left: 6px; display: flex; flex-direction: column; }
.card { border: 1px solid #d4d4d4; background: #fafafa; }
.card h4 { padding: 8px 0 0 7px; line-height: 20px; color: #444; }
.pages { height: 70px; margin-bottom: 6px; }
.filters { height: 92px; margin-bottom: 6px; padding: 0 5px; }
.filters h4 { padding-left: 2px; margin-bottom: 10px; }
.pill { display: block; height: 24px; line-height: 24px; border-radius: 12px; padding-left: 13px; color: #fff; font-weight: 400; font-size: 16px; letter-spacing: .18px; }
.measure { background: #00b180; }
.dim-pill { background: #4996b2; }
.marks { height: 349px; padding: 0 7px; }
.marks h4 { padding-left: 0; }
.marktype { margin-top: 14px; height: 24px; border: 1px solid #c8c8c8; border-radius: 2px; display: flex; align-items: center; font-size: 14px; color: #444; }
.marktype > svg { width: 14px; height: 14px; margin: 0 5px 0 11px; fill: none; stroke: #444; }
.marktype span { flex: 1; }
.marktype em { width: 23px; height: 100%; border-left: 1px solid #d8d8d8; display: flex; align-items: center; justify-content: center; }
.buttons { margin-top: 7px; display: grid; grid-template-columns: 54px 56px 54px; gap: 7px; }
.buttons div { height: 52px; border: 1px solid #d4d4d4; display: flex; flex-direction: column; align-items: center; justify-content: space-between; padding: 8px 0 2px; font-size: 13px; color: #111; letter-spacing: -.05px; line-height: 15px; }
.buttons svg { width: 18px; height: 18px; }
.buttons svg.t { width: 17px; height: 17px; }
.k { fill: none; stroke: #444; stroke-width: 1.300; }
.encodings { margin-top: 17px; padding-left: 11px; padding-right: 5px; display: flex; flex-direction: column; gap: 3px; }
.encodings li { display: flex; align-items: center; height: 24px; }
.encodings svg { width: 14px; height: 14px; margin-right: 6px; }
.encodings .t { width: 13px; height: 13px; margin-right: 7px; }
.encodings .pill { flex: 1; }

.center { width: 1046px; margin-left: 6px; display: flex; flex-direction: column; }
.shelf { height: 32px; border: 1px solid #d4d4d4; background: #fafafa; margin-bottom: 6px; display: flex; }
.shelf span { width: 159px; border-right: 1px solid #d4d4d4; display: flex; align-items: center; gap: 8px; padding-left: 7px; color: #444; letter-spacing: -.2px; }
.shelf svg { height: 12px; margin-top: -2px; }
.viewrow { display: flex; justify-content: space-between; align-items: flex-start; }
.view { width: 846px; height: 770px; background: #fff; border: 1px solid #d4d4d4; }
.view h1 { height: 48px; padding-top: 11px; text-align: center; font: 400 25px/34px "Noto Sans", sans-serif; color: #333; letter-spacing: -.08px; }
.pie { width: 190px; height: 180px; }
.labels { font: 300 15.500px "Noto Sans", sans-serif; fill: #222; text-anchor: middle; letter-spacing: .2px; }
.legend { width: 194px; height: 122px; background: #fff; border: 1px solid #d4d4d4; font: 300 15px "Noto Sans", sans-serif; color: #444; letter-spacing: .25px; }
.legend h4 { height: 35px; padding-left: 7px; background: #fafafa; font: 300 16px/35px Roboto, sans-serif; letter-spacing: -.1px; }
.legend li { height: 21px; line-height: 19px; display: flex; gap: 5px; padding: 0 0 0 3px; }
.legend ul { padding-top: 2px; }
.legend i { width: 14px; height: 14px; margin-top: 1px; }
.c1 { background: #c8f296; } .c2 { background: #95e8aa; } .c3 { background: #51d4bb; } .c4 { background: #28abb1; }

/* data guide */
.guide { width: 400px; margin-left: 6px; background: #fff; border-left: 1px solid #d4d4d4; border-top: 1px solid #d4d4d4; color: #4e4e4e; }
.guide-head { height: 31px; background: #fafafa; border-bottom: 1px solid #d4d4d4; display: flex; align-items: center; justify-content: space-between; padding: 0 6px 1px 22px; color: #000; font-size: 18px; font-weight: 500; letter-spacing: .22px; }
.guide-head svg { width: 8px; height: 8px; }
.guide-sheet { height: 59px; border-bottom: 1px solid #e8e8e8; display: flex; align-items: center; gap: 11px; padding: 0 0 2px 21px; font-size: 18px; font-weight: 500; }
.guide-sheet svg { width: 16px; height: 16px; fill: none; stroke: #777; stroke-width: 1.300; }
.guide h5 { height: 56px; display: flex; align-items: center; justify-content: space-between; padding: 0 18px 1px 20px; font-size: 18px; font-weight: 500; letter-spacing: .3px; }
.guide h5 svg { width: 16px; height: 16px; }
.guide .bar { border-bottom: 1px solid #e8e8e8; padding-bottom: 0; }
.details { height: 312px; border-bottom: 1px solid #e8e8e8; }
.details label { display: block; height: 35px; line-height: 44px; padding-left: 20px; font-size: 15px; font-weight: 400; letter-spacing: .35px; color: #333; }
.details h5 { padding-bottom: 2px; }
.textarea { width: 360px; height: 49px; margin-left: 20px; border: 1px solid #666; border-radius: 2px; padding: 5px; font-size: 15px; font-weight: 400; letter-spacing: .42px; line-height: 18px; color: #555; position: relative; white-space: nowrap; }
.textarea svg { position: absolute; right: 1px; bottom: 2px; width: 10px; height: 10px; }
.details h6 { margin-top: 19px; padding-left: 20px; font-size: 15px; line-height: 20px; font-weight: 400; letter-spacing: .36px; color: #444; }
.details p { display: flex; align-items: center; height: 20px; margin-top: 11px; padding-left: 21px; gap: 12px; font-size: 15px; letter-spacing: .55px; color: #555; }
.details p svg { width: 16px; height: 16px; }
.details p .pencil { width: 18px; height: 17px; margin-right: -2px; }
.details p + h6 { margin-top: 22px; }
.inviz { height: 203px; border-bottom: 1px solid #e8e8e8; }
.ds { height: 26px; margin: 12px 0 30px; display: flex; align-items: center; padding-left: 26px; gap: 15px; font-size: 18px; letter-spacing: .24px; white-space: nowrap; }
.ds svg { width: 14px; height: 14px; margin-top: -3px; }
.fld { height: 25px; line-height: 20px; display: flex; padding-left: 57px; font-size: 15px; letter-spacing: .35px; align-items: flex-start; }
.fld b { width: 31px; font-size: 11px; color: #4996b2; font-weight: 500; letter-spacing: .5px; }
.fld.g b { color: #00b180; }

/* sheet tabs */
.sheets { height: 38px; background: #e6e6e6; border-top: 1px solid #c9c9c9; border-bottom: 1px solid #d0d0d0; display: flex; color: #555; }
.sheets span { width: 71px; border-right: 1px solid #c9c9c9; padding: 1px 0 0 6px; display: flex; align-items: center; white-space: nowrap; letter-spacing: -.1px; }
.sheets .s-src { width: 163px; padding-left: 11px; }
.sheets .s72 { width: 72px; padding-left: 7px; } .sheets .s80 { width: 80px; }
.sheets .active { background: #fafafa; font-weight: 700; color: #444; padding-top: 0; letter-spacing: 0; }
.sheets .dashb { width: 125px; padding-left: 7px; }
.sheets .dashb svg { width: 12px; height: 12px; margin: -2px 5px 0 0; }
.sheets .db { width: 8px; height: 12px; margin: -2px 6px 0 0; }
.red { box-shadow: inset 0 -4px #f96176; }
.blue { box-shadow: inset 0 -4px #4e79a0; }
.sheets .new { width: 32px; padding: 0 0 2px 8px; }
.new svg { width: 16px; height: 16px; fill: none; stroke: #666; stroke-width: 1.200; }

/* status bar */
.status { height: 26px; background: #ebebeb; border-bottom: 1px solid #bababa; display: flex; align-items: center; font-size: 13.500px; font-weight: 400; color: #333; line-height: 24px; }
.status span { height: 100%; }
.st1 { width: 73px; padding-left: 4px; } .st2 { width: 130px; } .st3 { width: 1299px; border-right: 1px solid #ccc; }
.status i { height: 100%; border-right: 1px solid #ccc; }
.c157 { width: 157px; } .c32 { width: 32px; } .c57 { width: 57px; }
.nav { width: 71px; height: 100%; border-right: 1px solid #ccc; display: flex; align-items: center; padding-left: 7px; }
.nav svg { width: 56px; height: 8px; margin-bottom: 1px; }
.modes { width: 56px; height: 12px; margin: 0 0 1px 8px; }

/* taskbar */
.taskbar { height: 59px; background: #eee; display: flex; align-items: center; padding: 0 25px 2px 28px; }
.weather { width: 34px; height: 48px; }
.badge { fill: #fff; font: 400 14px "Open Sans", sans-serif; text-anchor: middle; }
.apps { display: flex; gap: 7.070px; margin-left: 260px; }
.apps svg { width: 48px; height: 48px; }
.apps .current { background: #f9f9f9; border-radius: 5px; box-shadow: 0 0 1px #bbb; }
.hp { fill: #fff; font: italic 700 14px "Liberation Sans", sans-serif; text-anchor: middle; }
.amz { fill: #111; font: 700 24px "Open Sans", sans-serif; text-anchor: middle; }
.help { fill: #fff; font: 800 25px "Open Sans", sans-serif; text-anchor: middle; }
.m365 { fill: #fff; font: 700 8px "Open Sans", sans-serif; text-anchor: middle; }
.word { fill: #fff; font: 700 12px "Open Sans", sans-serif; text-anchor: middle; }
.tray { width: 204px; height: 24px; margin-left: auto; }
.clock { width: 76px; display: flex; flex-direction: column; align-items: flex-end; font: 400 14.500px/19px "Open Sans", sans-serif; color: #1a1a1a; letter-spacing: -.05px; }
```
